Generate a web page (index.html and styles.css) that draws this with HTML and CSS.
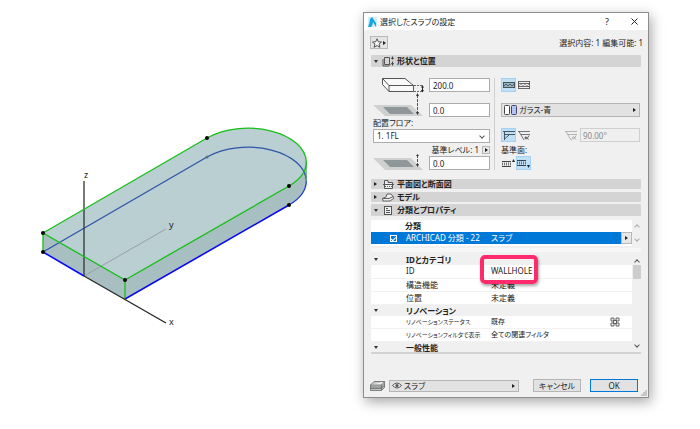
FILE: index.html
```html
<!DOCTYPE html>
<html lang="ja">
<head>
<meta charset="utf-8">
<meta name="viewport" content="width=device-width, initial-scale=1">
<title>選択したスラブの設定</title>
<link rel="stylesheet" href="styles.css">
</head>
<body>
<main class="workspace">
  <section class="model" aria-label="3D">
    <svg viewBox="0 0 363 429" role="img" aria-label="スラブ">
      <path d="M43 233L207 138A58.3 34 0 0 1 306.300 162V181A58.3 34 0 0 1 289 205L125 299L43 252Z" fill="#b9cfd2"/>
      <path d="M43 233L125 280L289 186A58.3 34 0 0 0 306.300 162V181A58.3 34 0 0 1 289 205L125 299L43 252Z" fill="#a8bfc2"/>
      <path d="M84 276L166 229" stroke="#999fa3" fill="none"/>
      <path d="M43 252L207 157A58.3 34 0 0 1 306.300 181" stroke="#2e55a8" stroke-width="1.3" fill="none"/>
      <path d="M84 181V276" stroke="#303436" stroke-width="1.3"/>
      <path d="M43 252L84 276M125 299L289 205" stroke="#0a0af5" stroke-width="1.6" fill="none"/>
      <path d="M306.300 162V181" stroke="#5fae7c" fill="none"/>
      <path d="M306.300 181A58.3 34 0 0 1 289 205" stroke="#2440d8" stroke-width="1.3" fill="none"/>
      <path d="M84 276L166 323" stroke="#202428" stroke-width="1.3"/>
      <path d="M43 233L207 138A58.3 34 0 0 1 306.300 162A58.3 34 0 0 1 289 186L125 280ZV252M125 280V299" stroke="#17bf17" stroke-width="1.3" fill="none"/>
      <circle cx="207" cy="157" r="1.5" fill="#5d7276"/>
      <circle cx="125" cy="299" r="1.3" fill="#444"/>
      <g fill="#050505"><circle cx="43" cy="233" r="2"/><circle cx="43" cy="252" r="2"/><circle cx="125" cy="280" r="2"/><circle cx="207" cy="138" r="2"/><circle cx="289" cy="186" r="2"/><circle cx="289" cy="205" r="2"/></g>
      <g class="axis"><text x="84" y="178">z</text><text x="169" y="228">y</text><text x="169" y="325">x</text></g>
    </svg>
  </section>

  <form class="dialog">
    <header class="titlebar">
      <svg width="9" height="10" viewBox="0 0 9 10"><rect width="9" height="10" fill="#d5ecf9"/><path d="M0 10Q2 6 2 2L4 0L8 6V10L5 5Q5 8 3 10Z" fill="#16a5df"/></svg>
      <h1>選択したスラブの設定</h1>
      <button type="button" class="win">?</button>
      <button type="button" class="win" aria-label="閉じる"><svg width="7" height="7" viewBox="0 0 7 7"><path d="M.5 .5L6.5 6.5M6.5 .5L.5 6.5" stroke="#222" fill="none"/></svg></button>
    </header>

    <div class="body">
      <div class="toolbar">
        <button type="button" class="star" aria-label="お気に入り"><svg width="10" height="10" viewBox="0 0 10 10"><path d="M5 .8L6.3 3.8L9.5 4L7 6.1L7.9 9.3L5 7.5L2.1 9.3L3 6.1L.5 4L3.7 3.8Z" fill="#f8f8f8" stroke="#444" stroke-width=".9"/></svg><i class="right"></i></button>
        <span>選択内容: 1 編集可能: 1</span>
      </div>

      <button type="button" class="section tall" aria-expanded="true"><i class="down"></i>
        <svg width="13" height="11" viewBox="0 0 13 11"><path d="M2.5 1.5H7.5V8.5H2.5ZM1 3V10H6.500L8.500 8.500" fill="none" stroke="#555"/><path d="M10.500 1V3.500M10.500 5.500V9" fill="none" stroke="#444"/><path d="M9 3L10.500 0L12 3ZM9 7L10.500 10L12 7Z" fill="#444"/></svg>
        <b>形状と位置</b></button>

      <div class="geometry">
        <div class="left">
          <div class="field"><svg width="52" height="20" viewBox="0 0 52 20"><path d="M9.500 3.500L32 3.500L40.500 10.500V16.500H16L9.500 9.500Z" fill="#f9f9f9" stroke="#444" stroke-width=".9"/><path d="M9.500 3.500L16 10.500H40.500M16 10.500V16.500" fill="none" stroke="#444" stroke-width=".9"/><path d="M41 10.500H50M41 16.500H50" stroke="#666" stroke-dasharray="2 1"/><path d="M49.500 11V16" stroke="#222"/><path d="M48 12.500L49.500 10L51 12.500ZM48 15L49.500 17.500L51 15Z" fill="#222"/></svg><input aria-label="厚さ" value="200.0"></div>
          <div class="field"><svg class="level" width="52" height="24" viewBox="0 0 52 24"><path d="M0 12H38L50 23H12Z" fill="#cfd0d0"/><path d="M10 14H34L41 21H17Z" fill="#90979b"/><path d="M44.500 2V20" stroke="#555" stroke-dasharray="3 1"/><path d="M43 3L44.500 0L46 3ZM43 19L44.500 22L46 19Z" fill="#333"/></svg><input aria-label="高さ" value="0.0"></div>
          <label class="caption" for="floor">配置フロア:</label>
          <div class="combo"><select id="floor"><option>1. 1FL</option></select><i class="chev"></i></div>
          <div class="base"><label for="level">基準レベル: 1</label><button type="button" class="tiny" aria-label="基準レベル"><i class="right"></i></button></div>
          <div class="field"><svg width="52" height="20" viewBox="0 0 52 20"><path d="M0 5H38L50 17H12Z" fill="#cfd0d0"/><path d="M10 7H34L41 14H17Z" fill="#90979b"/><path d="M44.500 2V12" stroke="#555" stroke-dasharray="3 1"/><path d="M43 11L44.500 14L46 11ZM43 3L44.500 1L46 3Z" fill="#333"/></svg><input id="level" value="0.0"></div>
        </div>
        <div class="right-col">
          <div class="tools">
            <button type="button" class="tool on" aria-label="カット"><svg width="12" height="8" viewBox="0 0 12 8"><rect x=".5" y="1.500" width="11" height="5" fill="#9ab0be" stroke="#455"/><path d="M1 5L3 3L5 5L7 3L9 5L11 3" fill="none" stroke="#345" stroke-width=".7"/></svg></button>
            <button type="button" class="tool" aria-label="全体"><svg width="12" height="8" viewBox="0 0 12 8"><path d="M.5 0V8M11.500 0V8M.5 .5H11.500M.5 2.500H11.500M.5 7.500H11.500M.5 5.500H11.500" stroke="#444" stroke-width=".8"/><path d="M1 5L3 3L5 5L7 3L9 5L11 3" fill="none" stroke="#777" stroke-width=".6"/></svg></button>
          </div>
          <div class="picker material"><svg width="13" height="10" viewBox="0 0 13 10"><rect x=".5" y=".5" width="5" height="9" rx="1" fill="#fff" stroke="#444"/><rect x="7.500" y=".5" width="5" height="9" rx="1" fill="#b3c3f5" stroke="#446"/></svg><select aria-label="材質"><option>ガラス-青</option></select><i class="right"></i></div>
          <div class="tools angle">
            <button type="button" class="tool on" aria-label="垂直"><svg width="12" height="10" viewBox="0 0 12 10"><path d="M0 1.500H12M2 4.500H12M1.500 1V10M1.500 9L6 5" fill="none" stroke="#456"/></svg></button>
            <button type="button" class="tool" aria-label="傾斜"><svg width="12" height="11" viewBox="0 0 12 11"><path d="M0 1.500H12M3 4.500H12M1 1.500L6 10" fill="none" stroke="#555" stroke-width=".8"/><path d="M11 5.500Q8 11 7 8Q7 5 10.500 9.500" fill="none" stroke="#333" stroke-width=".8"/></svg></button>
            <svg class="dim" width="12" height="11" viewBox="0 0 12 11"><path d="M0 1.500H12M3 4.500H12M1 1.500L6 10H7" fill="none" stroke="#b5b5b5"/><path d="M11 5.500Q8 11 7.500 8Q8 5 11 9.500" fill="none" stroke="#aaa"/></svg>
            <input aria-label="角度" value="90.00°" disabled>
          </div>
          <div class="caption plane">基準面:</div>
          <div class="tools">
            <button type="button" class="tool" aria-label="上面"><svg width="13" height="9" viewBox="0 0 13 9"><path d="M0 2.500H9M0 7.500H9" stroke="#444"/><path d="M0 5H9" stroke="#777" stroke-width="3" stroke-dasharray="1 1"/><path d="M10 3L11.500 0L13 3Z" fill="#222"/></svg></button>
            <button type="button" class="tool on" aria-label="下面"><svg width="13" height="9" viewBox="0 0 13 9"><path d="M0 1.500H9M0 6.500H9" stroke="#345"/><path d="M0 4H9" stroke="#678" stroke-width="3" stroke-dasharray="1 1"/><path d="M10 6L11.500 9L13 6Z" fill="#124"/></svg></button>
          </div>
        </div>
      </div>

      <button type="button" class="section" aria-expanded="false"><i class="right"></i>
        <svg width="11" height="10" viewBox="0 0 11 10"><path d="M1.500 5V1.500H5V3.500H9.500V5M0 5.500H11M1.500 6V9.500H9.500V6" fill="#eee" stroke="#555"/><path d="M2 7.500H9" stroke="#666" stroke-dasharray="1 1"/></svg>
        <b>平面図と断面図</b></button>
      <button type="button" class="section" aria-expanded="false"><i class="right"></i>
        <svg width="12" height="9" viewBox="0 0 12 9"><path d="M.5 5.500L4 4L5 1L9 1L11.500 4V5.500L8 8H1ZM.5 5.500H7.500L11 3.500" fill="#eee" stroke="#555" stroke-width=".9"/></svg>
        <b>モデル</b></button>
      <button type="button" class="section tall" aria-expanded="true"><i class="down"></i>
        <svg width="8" height="9" viewBox="0 0 8 9"><rect x=".5" y=".5" width="7" height="8" fill="#eee" stroke="#555"/><path d="M2 2.500H4M2 4.500H6M2 6.500H6" stroke="#555"/></svg>
        <b>分類とプロパティ</b></button>

      <div class="list classes">
        <div class="rows">
          <h2>分類</h2>
          <div class="selected"><input type="checkbox" id="cls" checked><label for="cls">ARCHICAD 分類 - 22</label><span>スラブ</span><button type="button" class="tiny" aria-label="分類を選択"><i class="right"></i></button></div>
        </div>
        <div class="scroll pale"><i class="chev up"></i><i class="chev"></i></div>
      </div>

      <div class="list props">
        <div class="rows">
          <table>
            <colgroup><col class="c-fold"><col class="c-name"><col><col class="c-icon"></colgroup>
            <tbody>
              <tr class="group"><td><i class="down"></i></td><th colspan="3">IDとカテゴリ</th></tr>
              <tr><td></td><td>ID</td><td class="marked">WALLHOLE<span class="marker"></span></td><td></td></tr>
              <tr><td></td><td>構造機能</td><td>未定義</td><td></td></tr>
              <tr><td></td><td>位置</td><td>未定義</td><td></td></tr>
              <tr class="group"><td><i class="down"></i></td><th colspan="3">リノベーション</th></tr>
              <tr class="compact"><td></td><td>リノベーションステータス</td><td>既存</td><td><svg width="10" height="10" viewBox="0 0 10 10"><path d="M1 1H4V4H1ZM6 1H9V4H6ZM1 6H4V9H1ZM6 6H9V9H6ZM3.500 3.500H6.500V6.500H3.500Z" fill="#eee" stroke="#555" stroke-width=".9"/></svg></td></tr>
              <tr class="compact"><td></td><td>リノベーションフィルタで表示</td><td>全ての関連フィルタ</td><td></td></tr>
              <tr class="group"><td><i class="down"></i></td><th colspan="3">一般性能</th></tr>
            </tbody>
          </table>
        </div>
        <div class="scroll"><i class="chev up"></i><span class="thumb"></span><i class="chev"></i></div>
      </div>
    </div>

    <footer class="footer">
      <svg width="15" height="10" viewBox="0 0 15 10"><path d="M.5 4L4 .5H14.500L11.500 4ZM.5 6H11.500L14.500 3M.5 7.500H11.500L14.500 5M.5 4V9.500H11.500L14.500 6.500V.5M11.500 4V9.500" fill="#c4c8c8" stroke="#666" stroke-width=".8"/></svg>
      <div class="picker layer"><svg width="10" height="7" viewBox="0 0 10 7"><path d="M.5 3.500Q5 -1.500 9.500 3.500Q5 8.500 .5 3.500Z" fill="#eee" stroke="#555"/><circle cx="5" cy="3.500" r="1.600" fill="#555"/></svg><select aria-label="レイヤー"><option>スラブ</option></select><i class="right"></i></div>
      <button type="button" class="push">キャンセル</button>
      <button type="submit" class="push ok">OK</button>
      <svg class="grip" width="6" height="6" viewBox="0 0 6 6"><path d="M4 0H6V6H0V4H2V2H4Z" fill="#c6c6c6"/></svg>
    </footer>
  </form>
</main>
</body>
</html>
```
FILE: styles.css
```css
* { box-sizing: border-box; }

body {
  margin: 0;
  background: #fff;
  color: #222;
  font: 8px/12px "Noto Sans", "Noto Sans CJK JP", sans-serif;
  font-feature-settings: "palt";
}

button, input, select {
  margin: 0;
  padding: 0;
  border: 0;
  border-radius: 0;
  background: none;
  color: inherit;
  font: inherit;
  font-feature-settings: inherit;
  appearance: none;
  min-width: 0;
}

svg { display: block; flex: none; }
h1, h2 { margin: 0; font-size: 8px; line-height: 12px; }

.workspace {
  display: grid;
  grid-template-columns: 363fr 286fr 51fr;
  align-items: start;
}

.model svg { width: 100%; height: auto; }
.axis { font-size: 9px; fill: #222; }

.dialog {
  margin-top: 12px;
  border: 1px solid #8d8d8d;
  background: #f0f0f0;
  box-shadow: 2px 4px 12px rgba(0, 0, 0, .35);
}

.titlebar {
  display: flex;
  align-items: center;
  height: 17px;
  padding: 0 10px 0 4px;
  background: #fff;
}
.titlebar h1 { flex: 1; margin-left: 3px; font-weight: 400; }
.win { display: flex; justify-content: center; width: 12px; font-size: 9px; }
.win:last-child { margin: 0 -2px 0 15px; }

.body { padding: 0 7px; }

.toolbar {
  display: flex;
  justify-content: space-between;
  align-items: center;
  height: 25px;
  margin: 0 -2px 0 -1px;
}
.star {
  display: flex;
  align-items: center;
  gap: 1px;
  height: 13px;
  padding: 0 1px;
  border: 1px solid #b8b8b8;
  background: #e4e4e4;
}

.right, .down { flex: none; display: block; width: 0; height: 0; border: solid transparent; }
.right { border-width: 2px 0 2px 3px; border-left-color: #222; }
.down { border-width: 3px 2px 0; border-top-color: #333; }

.chev {
  display: block;
  flex: none;
  width: 4px;
  height: 4px;
  border: solid #555;
  border-width: 0 1px 1px 0;
  transform: rotate(45deg);
}
.chev.up { transform: rotate(225deg); }

.section {
  display: grid;
  grid-template-columns: 5px 14px 1fr;
  align-items: center;
  gap: 2px;
  width: 100%;
  height: 10px;
  margin-top: 3px;
  padding-left: 3px;
  border-radius: 1px;
  background: #d4d4d4;
  text-align: left;
  line-height: 10px;
}
.section svg { justify-self: center; }
.section.tall { height: 12px; margin-top: 2px; }
.toolbar + .section { margin-top: 0; }

.geometry {
  display: grid;
  grid-template-columns: 122px 1fr;
  gap: 2px;
  padding: 11px 0 6px 2px;
}
.left, .right-col { display: flex; flex-direction: column; }
.left { border-right: 1px solid #cfcfcf; padding-right: 4px; }

.field { display: flex; align-items: center; justify-content: space-between; height: 14px; }
.field + .field { margin-top: 11px; }
.field input { width: 61px; }
.field svg { margin: -4px 0; }
.field .level { margin-top: -15px; }
.field input, .combo {
  height: 14px;
  padding: 0 3px;
  border: 1px solid #acacac;
  background: #fff;
}
.caption { height: 12px; line-height: 12px; }
.combo { display: flex; align-items: center; padding-right: 5px; }
.combo select, .picker select { flex: 1; }
.base { display: flex; align-items: center; justify-content: flex-end; gap: 3px; height: 13px; }
.tiny {
  display: flex;
  align-items: center;
  justify-content: center;
  width: 8px;
  height: 8px;
  border: 1px solid #b8b8b8;
  background: #e8e8e8;
}

.right-col { padding: 0 1px 0 4px; }
.tools { display: flex; align-items: center; height: 14px; }
.tool { display: flex; align-items: center; justify-content: center; width: 15px; height: 14px; }
.tool.on { background: #c0dff5; box-shadow: inset 0 0 0 1px #a2d1f3; }
.picker {
  display: flex;
  align-items: center;
  gap: 2px;
  height: 14px;
  padding: 0 3px 0 2px;
  border: 1px solid #b5b5b5;
  background: #e2e2e2;
}
.material { margin: 11px 0; }
.dim { margin-left: auto; }
.angle input {
  width: 60px;
  height: 14px;
  margin-left: 3px;
  padding: 0 2px;
  border: 1px solid #cfcfcf;
  color: #888;
}
.plane { height: 14px; line-height: 16px; }

.list { display: flex; }
.rows { flex: 1; min-width: 0; background: #fff; }
.scroll {
  display: flex;
  flex-direction: column;
  align-items: center;
  justify-content: space-between;
  width: 9px;
  padding: 5px 0;
}
.pale .chev { border-color: #aaa; }

.classes { margin-top: 4px; padding-bottom: 2px; border-bottom: 4px solid #f7f7f7; }
.classes h2 { padding-left: 34px; }
.classes .rows { height: 26px; }
.selected {
  display: grid;
  grid-template-columns: 16px 85px 1fr 11px;
  align-items: center;
  height: 12px;
  padding-left: 19px;
  background: #0078d7;
  color: #fff;
}
.selected input {
  width: 7px;
  height: 7px;
  border: 1px solid #fff;
  display: grid;
  place-items: center;
}
.selected input:checked::after {
  content: "";
  width: 4px;
  height: 2px;
  border: solid #fff;
  border-width: 0 0 1px 1px;
  transform: rotate(-45deg);
}
.selected .tiny { width: 11px; height: 12px; color: #222; }

.props {
  height: 102px;
  padding: 2px 0 1px;
  border-bottom: 2px solid #d2d2d2;
}
.props .rows { height: 98px; overflow: hidden; }
.props .scroll { justify-content: flex-start; padding: 6px 0 4px; }
.props .scroll .chev:last-child { margin-top: auto; }
.thumb { width: 8px; height: 14px; margin-top: 1px; background: #cdcdcd; }

table { width: 100%; border-collapse: collapse; table-layout: fixed; }
.c-fold { width: 35px; }
.c-name { width: 85px; }
.c-icon { width: 22px; }
td, th { height: 13px; padding: 0; line-height: 12px; text-align: left; white-space: nowrap; }
td { border-bottom: 1px solid #f2f2f2; }
td:first-child { padding-left: 3px; }
.group { background: #f0f0f0; }
.group td, .group th { height: 11px; line-height: 11px; border: 0; }
.compact { font-size: 7px; }
.compact td:nth-child(2) { font-size: 6px; }
.marked { position: relative; }
.marker {
  position: absolute;
  top: -10px;
  left: -11px;
  width: 58px;
  height: 29px;
  border: 4px solid #ff2b6d;
  border-radius: 5px;
  box-shadow: 1px 2px 3px rgba(0, 0, 0, .35);
}

.footer {
  position: relative;
  display: flex;
  align-items: center;
  margin-top: 25px;
  padding: 0 10px 5px 6px;
}
.layer { flex: 1; height: 12px; margin: 0 14px 0 4px; line-height: 10px; }
.push {
  width: 48px;
  height: 13px;
  border: 1px solid #b5b5b5;
  background: #e2e2e2;
  line-height: 11px;
}
.ok { margin-left: 9px; border-color: #0078d7; }
.grip { position: absolute; right: 1px; bottom: 1px; }
```
